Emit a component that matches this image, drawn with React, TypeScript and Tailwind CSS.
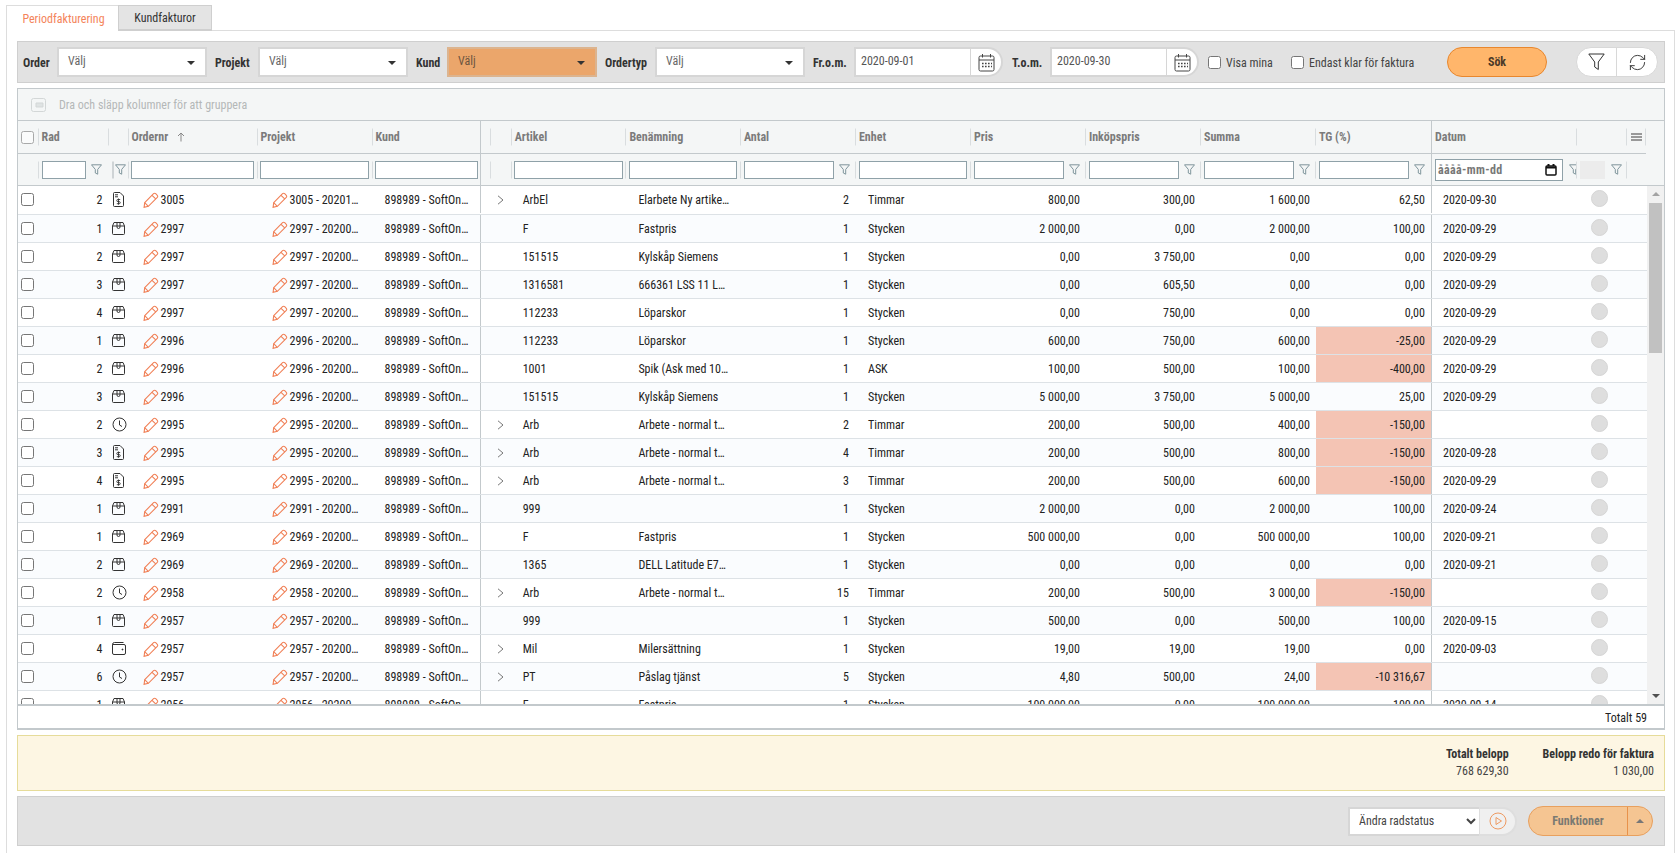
import { RefreshCw } from 'lucide-react'

const cols =
  'grid grid-cols-[19.5px_70px_20px_129px_115px_108.5px_30.7px_114.7px_114.6px_115px_115px_115px_115px_115px_116px_145.5px_50px_20px]'

type IconName = 'doc' | 'box' | 'clock' | 'wallet'
type Row = {
  rad: number
  icon: IconName
  order: string
  proj: string
  expand?: boolean
  art: string
  ben: string
  antal: string
  enhet: string
  pris: string
  inkop: string
  summa: string
  tg: string
  datum: string
}

const r = (
  rad: number,
  icon: IconName,
  order: string,
  proj: string,
  expand: boolean,
  art: string,
  ben: string,
  antal: string,
  enhet: string,
  pris: string,
  inkop: string,
  summa: string,
  tg: string,
  datum: string,
): Row => ({ rad, icon, order, proj, expand, art, ben, antal, enhet, pris, inkop, summa, tg, datum })

const rows: Row[] = [
  r(2, 'doc', '3005', '3005 - 20201…', true, 'ArbEl', 'Elarbete Ny artike…', '2', 'Timmar', '800,00', '300,00', '1 600,00', '62,50', '2020-09-30'),
  r(1, 'box', '2997', '2997 - 20200…', false, 'F', 'Fastpris', '1', 'Stycken', '2 000,00', '0,00', '2 000,00', '100,00', '2020-09-29'),
  r(2, 'box', '2997', '2997 - 20200…', false, '151515', 'Kylskåp Siemens', '1', 'Stycken', '0,00', '3 750,00', '0,00', '0,00', '2020-09-29'),
  r(3, 'box', '2997', '2997 - 20200…', false, '1316581', '666361 LSS 11 L…', '1', 'Stycken', '0,00', '605,50', '0,00', '0,00', '2020-09-29'),
  r(4, 'box', '2997', '2997 - 20200…', false, '112233', 'Löparskor', '1', 'Stycken', '0,00', '750,00', '0,00', '0,00', '2020-09-29'),
  r(1, 'box', '2996', '2996 - 20200…', false, '112233', 'Löparskor', '1', 'Stycken', '600,00', '750,00', '600,00', '-25,00', '2020-09-29'),
  r(2, 'box', '2996', '2996 - 20200…', false, '1001', 'Spik (Ask med 10…', '1', 'ASK', '100,00', '500,00', '100,00', '-400,00', '2020-09-29'),
  r(3, 'box', '2996', '2996 - 20200…', false, '151515', 'Kylskåp Siemens', '1', 'Stycken', '5 000,00', '3 750,00', '5 000,00', '25,00', '2020-09-29'),
  r(2, 'clock', '2995', '2995 - 20200…', true, 'Arb', 'Arbete - normal t…', '2', 'Timmar', '200,00', '500,00', '400,00', '-150,00', ''),
  r(3, 'doc', '2995', '2995 - 20200…', true, 'Arb', 'Arbete - normal t…', '4', 'Timmar', '200,00', '500,00', '800,00', '-150,00', '2020-09-28'),
  r(4, 'doc', '2995', '2995 - 20200…', true, 'Arb', 'Arbete - normal t…', '3', 'Timmar', '200,00', '500,00', '600,00', '-150,00', '2020-09-29'),
  r(1, 'box', '2991', '2991 - 20200…', false, '999', '', '1', 'Stycken', '2 000,00', '0,00', '2 000,00', '100,00', '2020-09-24'),
  r(1, 'box', '2969', '2969 - 20200…', false, 'F', 'Fastpris', '1', 'Stycken', '500 000,00', '0,00', '500 000,00', '100,00', '2020-09-21'),
  r(2, 'box', '2969', '2969 - 20200…', false, '1365', 'DELL Latitude E7…', '1', 'Stycken', '0,00', '0,00', '0,00', '0,00', '2020-09-21'),
  r(2, 'clock', '2958', '2958 - 20200…', true, 'Arb', 'Arbete - normal t…', '15', 'Timmar', '200,00', '500,00', '3 000,00', '-150,00', ''),
  r(1, 'box', '2957', '2957 - 20200…', false, '999', '', '1', 'Stycken', '500,00', '0,00', '500,00', '100,00', '2020-09-15'),
  r(4, 'wallet', '2957', '2957 - 20200…', true, 'Mil', 'Milersättning', '1', 'Stycken', '19,00', '19,00', '19,00', '0,00', '2020-09-03'),
  r(6, 'clock', '2957', '2957 - 20200…', true, 'PT', 'Påslag tjänst', '5', 'Stycken', '4,80', '500,00', '24,00', '-10 316,67', ''),
  r(1, 'box', '2956', '2956 - 20200…', false, 'F', 'Fastpris', '1', 'Stycken', '100 000,00', '0,00', '100 000,00', '100,00', '2020-09-14'),
]

function Pencil() {
  return (
    <svg width="16" height="16" viewBox="0 0 15 15" fill="none" stroke="#f07f55" strokeWidth="1" className="shrink-0">
      <path d="M1.600 10 9.900 1.600a1.400 1.400 0 0 1 2 0l1.500 1.500a1.400 1.400 0 0 1 0 2L5 13.400l-4 1z" />
      <path d="M8.500 3.100 11.900 6.500M1.600 10 5 13.400" />
    </svg>
  )
}

function RowIcon({ name }: { name: IconName }) {
  if (name === 'clock')
    return (
      <svg width="15" height="15" viewBox="0 0 15 15" fill="none" stroke="#333" strokeWidth="1">
        <circle cx="7.500" cy="7.500" r="6.500" />
        <path d="M7.500 3.500v4.500l2.500 1.500" />
      </svg>
    )
  if (name === 'doc')
    return (
      <svg width="11" height="15" viewBox="0 0 11 15" fill="none" stroke="#333" strokeWidth="1" className="ml-px">
        <path d="M.5 1.500a1 1 0 0 1 1-1H7L10.500 4v9.500a1 1 0 0 1-1 1h-8a1 1 0 0 1-1-1z" />
        <path d="M2 2.800h3M2 4.800h3" />
        <path d="M7.200 7.500H4.800a1 1 0 0 0 0 2.100h1.400a1 1 0 0 1 0 2.100H3.800M5.500 6.500v6.200" strokeWidth=".9" />
      </svg>
    )
  if (name === 'wallet')
    return (
      <svg width="14" height="13" viewBox="0 0 14 13" fill="none" stroke="#333" strokeWidth="1">
        <path d="M2.500.5h9M.5 2.500a2 2 0 0 1 2-2M.5 2.500V11A1.500 1.500 0 0 0 2 12.500h10a1.500 1.500 0 0 0 1.500-1.500V4A1.500 1.500 0 0 0 12 2.500H.5" />
        <circle cx="10.500" cy="7.500" r=".5" fill="#333" />
      </svg>
    )
  return (
    <svg width="13" height="13" viewBox="0 0 13 13" fill="none" stroke="#333" strokeWidth="1">
      <path d="M.5 4 2 .5h9L12.500 4v7.500a1 1 0 0 1-1 1h-10a1 1 0 0 1-1-1z" />
      <path d="M.5 4h12M5 .5V5a1.500 1.500 0 0 0 3 0V.5" />
    </svg>
  )
}

function Funnel({ clip }: { clip?: boolean }) {
  return (
    <svg width="11" height="11" viewBox="0 0 11 11" fill="none" stroke="#7f959c" strokeWidth="1" className={clip ? 'shrink-0 -mr-[3px]' : 'shrink-0'}>
      <path d="M.5.800h10L6.700 5.400v4.800L4.300 9V5.400z" />
    </svg>
  )
}

function Calendar() {
  return (
    <svg width="17" height="19" viewBox="0 0 17 19" fill="none" stroke="#444" strokeWidth="1">
      <rect x="1" y="3" width="15" height="15" rx="1.500" />
      <path d="M1 7h15M4.500 1v3.500M12.500 1v3.500" />
      <path stroke="#444" strokeWidth="1.600" strokeDasharray="1.600 1.400" d="M4 10.500h10M4 13.500h10" />
    </svg>
  )
}

function Select({ left, labelW, orange }: { left: string; labelW: string; orange?: boolean }) {
  return (
    <div className="flex items-center">
      <span className={`${labelW} mt-[2px] text-[12px] font-bold text-[#333]`}>{left}</span>
      <div
        className={`flex h-[30px] w-[150px] items-center justify-between border-2 pb-[2px] pl-[9px] pr-[10px] text-[12px] ${
          orange ? 'border-[#dcb48f] bg-[#eba66b] text-[#6d5540]' : 'border-[#d6d6d6] bg-white text-[#666]'
        }`}
      >
        Välj
        <span className="mt-[3px] h-0 w-0 border-x-[4px] border-t-[4px] border-x-transparent border-t-[#333]" />
      </div>
    </div>
  )
}

function DateBox({ label, value, labelW }: { label: string; value: string; labelW: string }) {
  return (
    <div className="flex items-center">
      <span className={`${labelW} mt-[2px] text-[12px] font-bold text-[#333]`}>{label}</span>
      <div className="flex h-[30px] items-stretch">
        <div className="flex w-[117px] items-center border-2 border-r border-[#d6d6d6] bg-white pb-[2px] pl-[5px] text-[12px] text-[#555]">
          {value}
        </div>
        <div className="flex w-[32px] items-center justify-center rounded-r-full border-2 border-l-0 border-[#d6d6d6] bg-white">
          <Calendar />
        </div>
      </div>
    </div>
  )
}

function Check({ label, w }: { label: string; w: string }) {
  return (
    <label className={`flex items-center ${w}`}>
      <input type="checkbox" className="h-[13px] w-[13px] shrink-0" />
      <span className="ml-[5px] mt-[2px] whitespace-nowrap text-[12px] text-[#444]">{label}</span>
    </label>
  )
}

function Sep({ strong }: { strong?: boolean }) {
  return <span className={`absolute left-0 top-1/2 h-[17px] -translate-y-1/2 w-px ${strong ? 'bg-[#c3c9cc]' : 'bg-[#d9dddf]'}`} />
}

function HeadCell({ label, sorted }: { label?: string; sorted?: boolean }) {
  return (
    <div className="relative flex items-center pl-[4px] text-[12px] font-bold text-[#7b7b7b]">
      <Sep />
      {label}
      {sorted && (
        <svg width="8" height="10" viewBox="0 0 8 10" fill="none" stroke="#888" strokeWidth="1" className="ml-[9px]">
          <path d="M4 9.500V1M1 4l3-3 3 3" />
        </svg>
      )}
    </div>
  )
}

function FilterCell({ w, funnel, tight }: { w: string; funnel?: boolean; tight?: boolean }) {
  return (
    <div className={`relative flex items-center ${tight ? 'pl-[3px]' : 'pl-[4px]'}`}>
      <Sep />
      <input className={`h-[18px] ${w} border border-[#8fa1a8] bg-white`} />
      {funnel && (
        <span className="ml-[5px]">
          <Funnel />
        </span>
      )}
    </div>
  )
}

export default function App() {
  return (
    <div className="h-[853px] overflow-hidden bg-white pl-[6px] pr-[4px] pt-[5px] font-[Roboto,sans-serif] [font-stretch:condensed] text-[#222]">
      <div className="flex h-[26px] text-[12px]">
        <div className="flex w-[112px] items-center justify-center border-l border-t border-[#ddd] bg-white pl-[2px] text-[#f4845a]">
          Periodfakturering
        </div>
        <div className="flex w-[94px] items-center justify-center border-x border-t border-[#cfcfcf] border-b-2 bg-[#e4e4e4] text-[#333]">
          Kundfakturor
        </div>
        <div className="flex-1 border-b border-[#ddd]" />
      </div>

      <div className="h-[830px] border-x border-[#ddd] pl-[10px] pr-[9px] pt-[10px]">
        <div className="flex h-[42px] items-center border border-[#cfcfcf] bg-[#e2e2e2] pl-[5px]">
          <Select left="Order" labelW="w-[34px]" />
          <div className="ml-[8px]">
            <Select left="Projekt" labelW="w-[43px]" />
          </div>
          <div className="ml-[8px]">
            <Select left="Kund" labelW="w-[31px]" orange />
          </div>
          <div className="ml-[8px]">
            <Select left="Ordertyp" labelW="w-[50px]" />
          </div>
          <div className="ml-[8px]">
            <DateBox label="Fr.o.m." value="2020-09-01" labelW="w-[41px]" />
          </div>
          <div className="ml-[9px]">
            <DateBox label="T.o.m." value="2020-09-30" labelW="w-[38px]" />
          </div>
          <div className="ml-[9px]">
            <Check label="Visa mina" w="w-[83px]" />
          </div>
          <Check label="Endast klar för faktura" w="w-[156px]" />
          <button className="h-[30px] w-[100px] rounded-full border border-[#e8872e] bg-[#ffb66b] text-[12px] font-bold text-[#4b3a28]">
            Sök
          </button>
          <div className="ml-[29px] flex h-[30px] w-[82px] rounded-full border border-[#d8d8d8] bg-white">
            <div className="flex w-[40px] items-center justify-center border-r border-[#d8d8d8]">
              <svg width="17" height="18" viewBox="0 0 17 18" fill="none" stroke="#333" strokeWidth="1">
                <path d="M.8 1h15.400L10.300 9v7.500L6.700 14V9z" />
              </svg>
            </div>
            <div className="flex flex-1 items-center justify-center">
              <RefreshCw size={19} strokeWidth={1.1} color="#222" />
            </div>
          </div>
        </div>

        <div className="mt-[5px] border-x border-t border-b-2 border-[#c3c9cc]">
          <div className="flex h-[32px] items-center border-b border-[#c3c9cc] bg-[#f4f6f6] pl-[13px] text-[12px] text-[#b4b8b8]">
            <svg width="15" height="14" viewBox="0 0 15 14" fill="none" stroke="#d3d7d7" strokeWidth="1">
              <rect x=".5" y=".5" width="14" height="13" rx="2" />
              <path d="M5 5h7v4H5z" fill="#dfe3e3" />
            </svg>
            <span className="ml-[13px]">Dra och släpp kolumner för att gruppera</span>
          </div>

          <div className="flex h-[33px] bg-[#f4f6f6]">
            <div className={`${cols} border-b border-[#c3c9cc]`}>
              <div className="flex items-center pl-[3px]">
                <input type="checkbox" className="h-[13px] w-[13px] opacity-60" />
              </div>
              <HeadCell label="Rad" />
              <HeadCell />
              <HeadCell label="Ordernr" sorted />
              <HeadCell label="Projekt" />
              <HeadCell label="Kund" />
              <div className="relative border-l border-[#c3c9cc]">
                <span className="absolute left-[9px] top-1/2 h-[17px] w-px -translate-y-1/2 bg-[#d9dddf]" />
              </div>
              <HeadCell label="Artikel" />
              <HeadCell label="Benämning" />
              <HeadCell label="Antal" />
              <HeadCell label="Enhet" />
              <HeadCell label="Pris" />
              <HeadCell label="Inköpspris" />
              <HeadCell label="Summa" />
              <HeadCell label="TG (%)" />
              <div className="flex items-center border-l border-[#c3c9cc] pl-[3px] text-[12px] font-bold text-[#7b7b7b]">Datum</div>
              <HeadCell />
              <div className="relative flex items-center justify-center">
                <Sep />
                <span className="h-[8px] w-[11px] border-y-2 border-[#999] after:mt-px after:block after:h-[2px] after:bg-[#999]" />
                <span className="absolute right-0 top-1/2 h-[17px] w-px -translate-y-1/2 bg-[#d9dddf]" />
              </div>
            </div>
          </div>

          <div className="flex h-[32px] border-b border-[#c3c9cc] bg-[#f4f6f6]">
            <div className={cols}>
              <div />
              <FilterCell w="w-[44px]" funnel />
              <div className="relative flex items-center pl-[7px]">
                <span className="absolute left-[4px] top-1/2 h-[17px] w-[2px] -translate-y-1/2 bg-[#cfd4d6]" />
                <Funnel />
              </div>
              <FilterCell w="w-[123px]" tight />
              <FilterCell w="w-[109px]" tight />
              <FilterCell w="w-[103px]" tight />
              <div className="relative border-l border-[#c3c9cc]">
                <span className="absolute left-[9px] top-1/2 h-[17px] w-px -translate-y-1/2 bg-[#d9dddf]" />
              </div>
              <FilterCell w="w-[109px]" tight />
              <FilterCell w="w-[108px]" />
              <FilterCell w="w-[90px]" funnel />
              <FilterCell w="w-[108px]" />
              <FilterCell w="w-[90px]" funnel />
              <FilterCell w="w-[90px]" funnel />
              <FilterCell w="w-[90px]" funnel />
              <FilterCell w="w-[90px]" funnel />
              <div className="flex items-center overflow-hidden border-l border-[#c3c9cc] pl-[3px]">
                <div className="flex h-[22px] w-[128px] shrink-0 items-center justify-between border border-[#8fa1a8] bg-white pl-[2px] pr-[5px] text-[12px] font-bold tracking-[0.03em] text-[#777]">
                  åååå-mm-dd
                  <svg width="12" height="12" viewBox="0 0 12 12" fill="none" stroke="#111" strokeWidth="1.500">
                    <rect x="1" y="2" width="10" height="9" rx="1" />
                    <path d="M1 3.500h10M3.500 0v2M8.500 0v2" strokeWidth="2" />
                  </svg>
                </div>
                <span className="ml-[6px]">
                  <Funnel clip />
                </span>
              </div>
              <div className="relative flex items-center pl-[4px]">
                <Sep />
                <div className="h-[18px] w-[25px] bg-[#ececec]" />
                <span className="ml-[6px]">
                  <Funnel />
                </span>
              </div>
              <div className="relative">
                <Sep />
              </div>
            </div>
          </div>

          <div className="relative h-[518px] overflow-hidden">
            {rows.map((row, i) => (
              <div
                key={i}
                className={`${cols} h-[28px] first:h-[29px] first:pb-px border-b border-[#dde2e6] text-[12px] ${i % 2 ? 'bg-[#fafcfe]' : 'bg-white'}`}
              >
                <div className="flex items-center pl-[3px]">
                  <input type="checkbox" className="h-[13px] w-[13px]" />
                </div>
                <div className="flex items-center justify-end pr-[5px]">{row.rad}</div>
                <div className="flex items-center pl-[4px]">
                  <RowIcon name={row.icon} />
                </div>
                <div className="flex items-center pl-[15px]">
                  <Pencil />
                  <span className="ml-[2px]">{row.order}</span>
                </div>
                <div className="flex items-center pl-[15px]">
                  <Pencil />
                  <span className="ml-[2px] whitespace-nowrap">{row.proj}</span>
                </div>
                <div className="flex items-center whitespace-nowrap pl-[13px]">898989 - SoftOn…</div>
                <div className="flex items-center border-l border-[#c3c9cc] pl-[16px]">
                  {row.expand && (
                    <svg width="7" height="10" viewBox="0 0 7 10" fill="none" stroke="#777" strokeWidth="1">
                      <path d="M1 .800 6 5 1 9.200" />
                    </svg>
                  )}
                </div>
                <div className="flex items-center pl-[12px]">{row.art}</div>
                <div className="flex items-center whitespace-nowrap pl-[13px]">{row.ben}</div>
                <div className="flex items-center justify-end pr-[6px]">{row.antal}</div>
                <div className="flex items-center pl-[13px]">{row.enhet}</div>
                <div className="flex items-center justify-end pr-[5px]">{row.pris}</div>
                <div className="flex items-center justify-end pr-[5px]">{row.inkop}</div>
                <div className="flex items-center justify-end pr-[5px]">{row.summa}</div>
                <div className={`ml-px flex items-center justify-end pr-[6px] ${row.tg.startsWith('-') ? 'bg-[#f4c4b4]' : ''}`}>{row.tg}</div>
                <div className="flex items-center border-l border-[#c3c9cc] pl-[11px]">{row.datum}</div>
                <div className="flex items-start justify-start pl-[15px] pt-[4px]">
                  <span className="h-[17px] w-[17px] rounded-full border border-[#d5d5d5] bg-[#dedede]" />
                </div>
                <div />
              </div>
            ))}
            <div className="absolute bottom-0 right-0 top-0 flex w-[17px] flex-col items-center justify-between bg-[#f1f1f1] py-[6px]">
              <span className="h-0 w-0 border-x-[4px] border-b-[4px] border-x-transparent border-b-[#a3a3a3]" />
              <span className="h-0 w-0 border-x-[4px] border-t-[4px] border-x-transparent border-t-[#505050]" />
            </div>
            <div className="absolute right-[2px] top-[17px] h-[150px] w-[13px] bg-[#c1c1c1]" />
          </div>

          <div className="flex h-[24px] items-center justify-end border-t-2 border-[#c3c9cc] bg-white pr-[17px] pt-px text-[12px]">
            Totalt 59
          </div>
        </div>

        <div className="mt-[5px] flex h-[56px] items-center justify-end gap-[34px] border border-[#e6dc9a] bg-[#fdf6e3] pr-[10px] text-right text-[12px] leading-[17px]">
          <div>
            <div className="font-bold text-[#333]">Totalt belopp</div>
            <div className="text-[#444]">768 629,30</div>
          </div>
          <div>
            <div className="font-bold text-[#333]">Belopp redo för faktura</div>
            <div className="text-[#444]">1 030,00</div>
          </div>
        </div>

        <div className="mt-[5px] flex h-[50px] items-center justify-end border border-[#cfcfcf] bg-[#e2e2e2] pr-[11px]">
          <div className="flex h-[29px] items-stretch">
            <select className="w-[131px] border-2 border-r-0 border-[#d6d6d6] bg-white pl-[5px] text-[12px] text-[#444]">
              <option>Ändra radstatus</option>
            </select>
            <div className="flex w-[38px] items-center justify-center rounded-r-full border-2 border-l border-[#dedede] bg-[#f0f0f0]">
              <svg width="18" height="18" viewBox="0 0 18 18" fill="none" stroke="#ee9a62" strokeWidth="1">
                <circle cx="9" cy="9" r="8" />
                <path d="M7 5.500 12.500 9 7 12.500z" />
              </svg>
            </div>
          </div>
          <div className="ml-[11px] flex h-[30px] w-[125px] rounded-full border border-[#e8a05e] bg-[#f5c592]">
            <div className="flex w-[99px] items-center justify-center border-r border-[#e8924a] text-[12px] font-bold text-[#7a7a72]">
              Funktioner
            </div>
            <div className="flex flex-1 items-center justify-center">
              <span className="h-0 w-0 border-x-[4px] border-b-[4px] border-x-transparent border-b-[#777]" />
            </div>
          </div>
        </div>
      </div>
    </div>
  )
}
